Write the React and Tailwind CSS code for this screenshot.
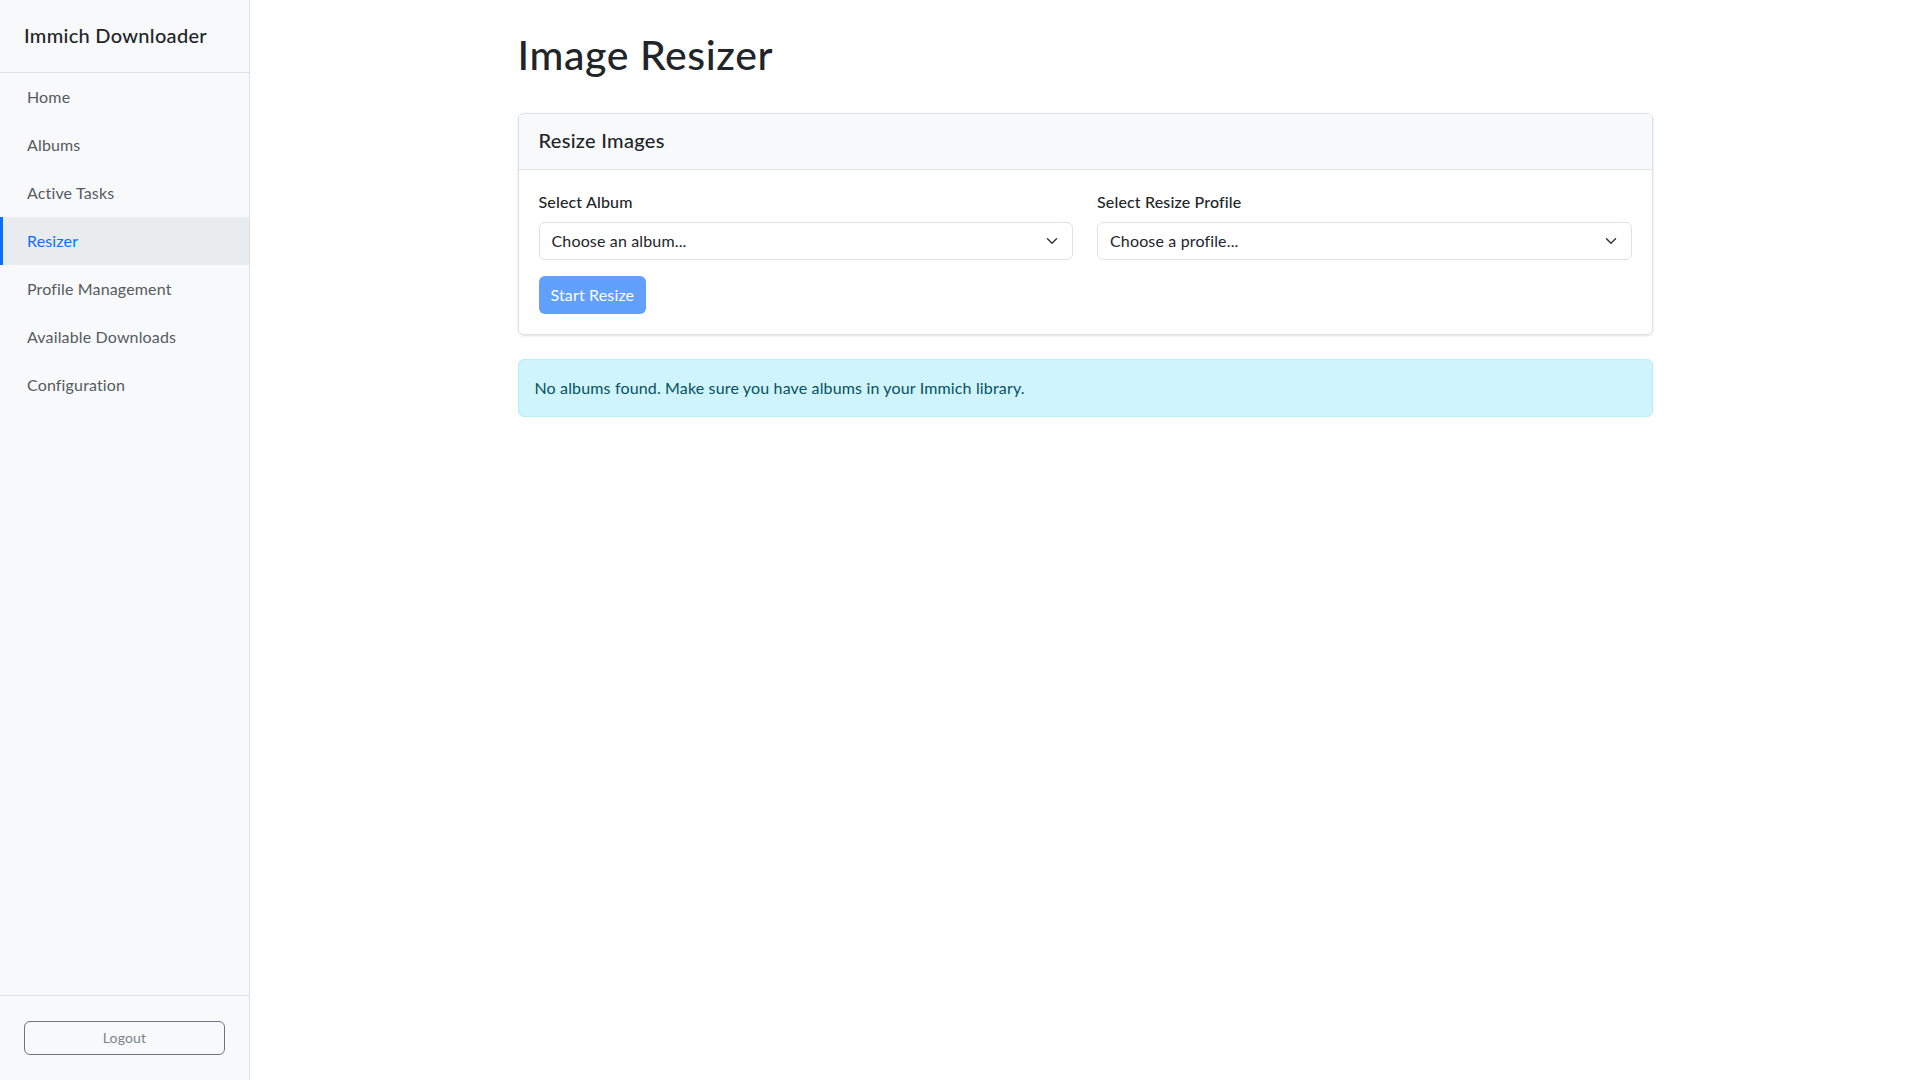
import React from "react";

const navItems = [
  "Home",
  "Albums",
  "Active Tasks",
  "Resizer",
  "Profile Management",
  "Available Downloads",
  "Configuration",
];

function Chevron() {
  return (
    <svg viewBox="0 0 16 16" className="w-4 h-3" fill="none">
      <path
        d="m2 5 6 6 6-6"
        stroke="#343a40"
        strokeWidth="2"
        strokeLinecap="round"
        strokeLinejoin="round"
      />
    </svg>
  );
}

function SelectBox({ label, placeholder }) {
  return (
    <div className="flex-1">
      <label className="block mb-2 text-[16px] leading-6 font-medium text-[#212529]">
        {label}
      </label>
      <div className="h-[38px] flex items-center justify-between pl-3 pr-3 border border-[#dee2e6] rounded-md bg-white text-[#212529]">
        <span>{placeholder}</span>
        <Chevron />
      </div>
    </div>
  );
}

export default function App() {
  return (
    <div
      className="min-h-screen flex bg-white text-[#212529] tracking-[0.15px]"
      style={{ fontFamily: "Lato, 'Noto Sans', sans-serif" }}
    >
      {/* Sidebar */}
      <aside className="w-[250px] h-screen shrink-0 bg-[#f8f9fa] border-r border-[#dee2e6] flex flex-col">
        <div className="h-[73px] px-6 pb-[3px] flex items-center border-b border-[#dee2e6]">
          <h1 className="text-[20px] font-medium text-[#212529] tracking-[0.3px]">Immich Downloader</h1>
        </div>
        <nav className="flex-1 flex flex-col">
          {navItems.map((item) =>
            item === "Resizer" ? (
              <a
                key={item}
                href="#"
                className="h-12 flex items-center pl-6 border-l-[3px] border-[#0d6efd] bg-[#e9ecef] text-[#0d6efd]"
              >
                {item}
              </a>
            ) : (
              <a
                key={item}
                href="#"
                className="h-12 flex items-center pl-6 border-l-[3px] border-transparent text-[#555b61]"
              >
                {item}
              </a>
            )
          )}
        </nav>
        <div className="border-t border-[#dee2e6] px-6 py-[25px]">
          <button className="w-full h-[34px] border border-[#6c757d] rounded-md text-sm text-[#7a828a]">
            Logout
          </button>
        </div>
      </aside>

      {/* Main */}
      <main className="flex-1">
        <div className="max-w-[1135px] mx-auto pt-[31px]">
          <h2 className="text-[41px] leading-[48px] font-medium tracking-[0.6px] mb-[34px]">Image Resizer</h2>

          <div className="border border-[#dee2e6] rounded-md shadow-sm mb-6">
            <div className="h-[56px] px-5 pb-[3px] flex items-center bg-[#f8f9fa] border-b border-[#dee2e6] rounded-t-md">
              <h3 className="text-[20px] font-medium tracking-[0.3px]">Resize Images</h3>
            </div>
            <div className="p-5">
              <div className="flex gap-6 mb-4">
                <SelectBox label="Select Album" placeholder="Choose an album..." />
                <SelectBox label="Select Resize Profile" placeholder="Choose a profile..." />
              </div>
              <button className="h-[38px] px-3 rounded-md bg-[#0d6efd] opacity-65 text-white">
                Start Resize
              </button>
            </div>
          </div>

          <div className="px-4 py-4 leading-6 rounded-md bg-[#cff4fc] border border-[#b6effb] text-[#055160]">
            No albums found. Make sure you have albums in your Immich library.
          </div>
        </div>
      </main>
    </div>
  );
}
